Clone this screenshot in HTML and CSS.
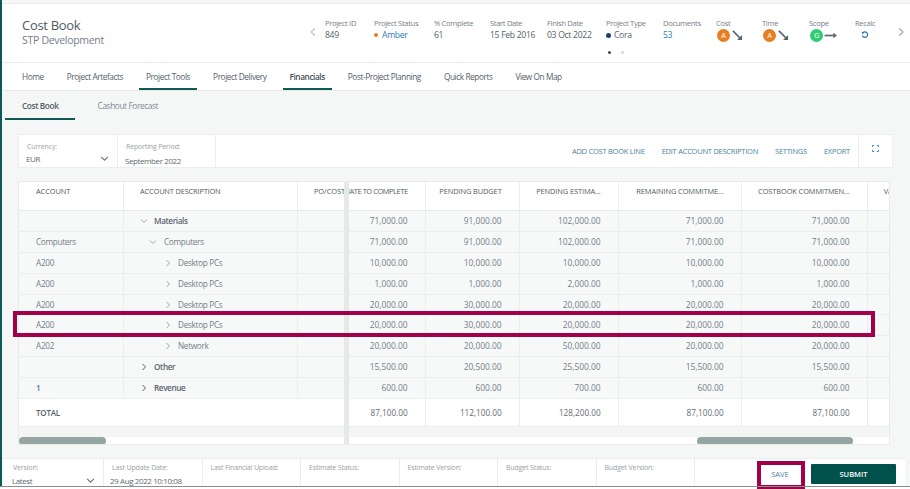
FILE: index.html
```html
<!DOCTYPE html>
<html lang="en">
<head>
<meta charset="utf-8">
<title>Cost Book</title>
<link rel="stylesheet" href="styles.css">
</head>
<body>
<svg class="defs" width="0" height="0" aria-hidden="true">
  <symbol id="right" viewBox="0 0 8 8"><path d="M2.500 1l3 3-3 3" fill="none" stroke="currentColor" stroke-width="1"/></symbol>
  <symbol id="left" viewBox="0 0 8 8"><path d="M5.500 1l-3 3 3 3" fill="none" stroke="currentColor" stroke-width="1"/></symbol>
  <symbol id="down" viewBox="0 0 8 8"><path d="M1 2.500l3 3 3-3" fill="none" stroke="currentColor" stroke-width="1"/></symbol>
  <symbol id="trend" viewBox="0 0 12 12"><path d="M1 1l8 8" stroke="#56656f" stroke-width="1.800" fill="none"/><path d="M11 5.500v5.500h-5.500z" fill="#56656f"/></symbol>
  <symbol id="flat" viewBox="0 0 14 12"><path d="M0 6h10" stroke="#56656f" stroke-width="1.800" fill="none"/><path d="M9.500 3l4 3-4 3z" fill="#56656f"/></symbol>
</svg>
<div class="app">
  <header class="head">
    <div class="title">
      <h1>Cost Book</h1>
      <p>STP Development</p>
    </div>
    <svg class="pager"><use href="#left"/></svg>
    <div class="kpi-wrap">
      <div class="kpis">
        <div class="kpi"><span>Project ID</span><b>849</b></div>
        <div class="kpi"><span>Project Status</span><b class="link"><i class="dot amber"></i>Amber</b></div>
        <div class="kpi"><span>% Complete</span><b>61</b></div>
        <div class="kpi"><span>Start Date</span><b>15 Feb 2016</b></div>
        <div class="kpi"><span>Finish Date</span><b>03 Oct 2022</b></div>
        <div class="kpi"><span>Project Type</span><b><i class="dot navy"></i>Cora</b></div>
        <div class="kpi"><span>Documents</span><b class="link">53</b></div>
        <div class="kpi"><span>Cost</span><b class="rag"><i class="badge a">A</i><svg class="trend"><use href="#trend"/></svg></b></div>
        <div class="kpi"><span>Time</span><b class="rag"><i class="badge a">A</i><svg class="trend"><use href="#trend"/></svg></b></div>
        <div class="kpi"><span>Scope</span><b class="rag"><i class="badge g">G</i><svg class="flat"><use href="#flat"/></svg></b></div>
        <div class="kpi"><span>Recalc</span><b class="rag"><svg class="recalc" viewBox="0 0 10 10"><path d="M2 2.600a3.400 3.400 0 1 1-.4 3" fill="none" stroke="#2a7ab8" stroke-width="1.500"/><path d="M0.600 1l3.600.6-2.400 2.600z" fill="#2a7ab8"/></svg></b></div>
      </div>
      <div class="dots"><i class="on"></i><i></i></div>
    </div>
    <svg class="pager next"><use href="#right"/></svg>
  </header>

  <nav class="nav">
    <a>Home</a><a>Project Artefacts</a><a class="under">Project Tools</a><a>Project Delivery</a><a class="under strong">Financials</a><a>Post-Project Planning</a><a>Quick Reports</a><a>View On Map</a>
  </nav>

  <div class="subnav">
    <a class="current">Cost Book</a><a>Cashout Forecast</a>
  </div>

  <section class="toolbar">
    <div class="field sel"><label>Currency:</label><div class="val">EUR<svg class="caret"><use href="#down"/></svg></div></div>
    <div class="field"><label>Reporting Period:</label><div class="val low">September 2022</div></div>
    <div class="actions"><a>ADD COST BOOK LINE</a><a>EDIT ACCOUNT DESCRIPTION</a><a>SETTINGS</a><a>EXPORT</a></div>
    <div class="full"><svg viewBox="0 0 8 8"><path d="M0.500 2.500v-2h2M5.500 .5h2v2M7.500 5.500v2h-2M2.500 7.500h-2v-2" fill="none" stroke="#2a7ab8" stroke-width="1"/></svg></div>
  </section>

  <section class="table">
    <div class="pane frozen">
      <div class="th">ACCOUNT</div><div class="th desc">ACCOUNT DESCRIPTION</div><div class="th clip">PO/COST</div>

      <div class="td"></div><div class="td tree l1 strong"><svg class="chev"><use href="#down"/></svg>Materials</div><div class="td"></div>
      <div class="td">Computers</div><div class="td tree l2"><svg class="chev"><use href="#down"/></svg>Computers</div><div class="td"></div>
      <div class="td">A200</div><div class="td tree l3"><svg class="chev"><use href="#right"/></svg>Desktop PCs</div><div class="td"></div>
      <div class="td">A200</div><div class="td tree l3"><svg class="chev"><use href="#right"/></svg>Desktop PCs</div><div class="td"></div>
      <div class="td">A200</div><div class="td tree l3"><svg class="chev"><use href="#right"/></svg>Desktop PCs</div><div class="td"></div>
      <div class="td">A200</div><div class="td tree l3"><svg class="chev"><use href="#right"/></svg>Desktop PCs</div><div class="td"></div>
      <div class="td">A202</div><div class="td tree l3"><svg class="chev"><use href="#right"/></svg>Network</div><div class="td"></div>
      <div class="td"></div><div class="td tree l1 strong"><svg class="chev dark"><use href="#right"/></svg>Other</div><div class="td"></div>
      <div class="td acc">1</div><div class="td tree l1 strong"><svg class="chev dark"><use href="#right"/></svg>Revenue</div><div class="td"></div>

      <div class="total-label">TOTAL</div>
      <div class="gap"></div>
      <div class="track"><div class="thumb left"></div></div>
    </div>
    <div class="splitter"></div>
    <div class="pane scroll">
      <div class="th end tight">ESTIMATE TO COMPLETE</div><div class="th end">PENDING BUDGET</div><div class="th end">PENDING ESTIMA...</div><div class="th end">REMAINING COMMITME...</div><div class="th end">COSTBOOK COMMITMEN...</div><div class="th clip">VARIANCE</div>

      <div class="td num">71,000.00</div><div class="td num">91,000.00</div><div class="td num">102,000.00</div><div class="td num">71,000.00</div><div class="td num">71,000.00</div><div class="td"></div>
      <div class="td num">71,000.00</div><div class="td num">91,000.00</div><div class="td num">102,000.00</div><div class="td num">71,000.00</div><div class="td num">71,000.00</div><div class="td"></div>
      <div class="td num">10,000.00</div><div class="td num">10,000.00</div><div class="td num">10,000.00</div><div class="td num">10,000.00</div><div class="td num">10,000.00</div><div class="td"></div>
      <div class="td num">1,000.00</div><div class="td num">1,000.00</div><div class="td num">2,000.00</div><div class="td num">1,000.00</div><div class="td num">1,000.00</div><div class="td"></div>
      <div class="td num">20,000.00</div><div class="td num">30,000.00</div><div class="td num">20,000.00</div><div class="td num">20,000.00</div><div class="td num">20,000.00</div><div class="td"></div>
      <div class="td num">20,000.00</div><div class="td num">30,000.00</div><div class="td num">20,000.00</div><div class="td num">20,000.00</div><div class="td num">20,000.00</div><div class="td"></div>
      <div class="td num">20,000.00</div><div class="td num">20,000.00</div><div class="td num">50,000.00</div><div class="td num">20,000.00</div><div class="td num">20,000.00</div><div class="td"></div>
      <div class="td num">15,500.00</div><div class="td num">20,500.00</div><div class="td num">25,500.00</div><div class="td num">15,500.00</div><div class="td num">15,500.00</div><div class="td"></div>
      <div class="td num">600.00</div><div class="td num">600.00</div><div class="td num">700.00</div><div class="td num">600.00</div><div class="td num">600.00</div><div class="td"></div>

      <div class="tot num">87,100.00</div><div class="tot num">112,100.00</div><div class="tot num">128,200.00</div><div class="tot num">87,100.00</div><div class="tot num">87,100.00</div><div class="tot"></div>
      <div class="gap"></div>
      <div class="track"><div class="thumb right"></div></div>
    </div>
  </section>

  <footer class="foot">
    <div class="fcell sel"><label>Version:</label><div class="val">Latest<svg class="caret"><use href="#down"/></svg></div></div>
    <div class="fcell"><label>Last Update Date:</label><div class="val">29 Aug 2022 10:10:08</div></div>
    <div class="fcell"><label>Last Financial Upload:</label></div>
    <div class="fcell"><label>Estimate Status:</label></div>
    <div class="fcell"><label>Estimate Version:</label></div>
    <div class="fcell"><label>Budget Status:</label></div>
    <div class="fcell"><label>Budget Version:</label></div>
    <div class="buttons"><button class="save">SAVE</button><button class="submit">SUBMIT</button></div>
  </footer>

  <div class="hl hl-row"></div>
  <div class="hl hl-save"></div>
</div>
</body>
</html>
```
FILE: styles.css
```css
* { box-sizing: border-box; }
html, body { margin: 0; padding: 0; background: #fff; }
body { width: 910px; height: 489px; overflow: hidden; font-family: "Open Sans", "Noto Sans", sans-serif; color: #5f6b73; }
.defs { position: absolute; }
.app { position: relative; width: 910px; height: 487px; border-left: 2px solid #0b5a55; background: #f5f7f7; display: flex; flex-direction: column; }

.head { height: 60px; margin-top: 3px; background: #fff; border-top: 1px solid #e9ebeb; border-bottom: 1px solid #e9ebeb; display: flex; align-items: flex-start; flex: none; }
.title { width: 306px; padding: 13px 0 0 20px; }
.title h1 { margin: 0; font-size: 13px; line-height: 17px; font-weight: 400; letter-spacing: -0.3px; color: #4e5b64; }
.title p { margin: 0; font-size: 10.500px; line-height: 13px; letter-spacing: -0.3px; color: #74808a; }
.pager { width: 10px; height: 10px; margin: 23px 0 0 0; color: #c3c8cb; flex: none; }
.pager.next { margin-left: 6px; color: #a4abb0; }
.kpi-wrap { width: 565px; margin-left: 7px; padding-top: 14px; }
.kpis { display: grid; grid-template-columns: 49px 60px 56px 57px 59px 57px 53px 46px 47px 46px 40px; }
.kpi { display: flex; flex-direction: column; }
.kpi span { font-size: 7.600px; line-height: 11px; letter-spacing: -0.33px; color: #75818a; white-space: nowrap; }
.kpi b { font-size: 8.600px; line-height: 12px; letter-spacing: -0.3px; font-weight: 400; color: #55626b; white-space: nowrap; display: flex; align-items: center; }
.kpi b.link { color: #2f7db5; }
.dot { display: inline-block; width: 4px; height: 4px; border-radius: 50%; margin-right: 4px; }
.dot.amber { background: #e67e22; }
.dot.navy { width: 5px; height: 5px; background: #1f3f6e; margin-right: 3px; }
.rag { height: 13px; }
.badge { width: 13px; height: 13px; margin-left: 1px; border-radius: 50%; color: #fff; font-size: 7.500px; line-height: 13px; font-style: normal; text-align: center; flex: none; }
.badge.a { background: #e67e22; }
.badge.g { background: #2ecc71; }
.trend { width: 11px; height: 11px; margin-left: 2px; }
.flat { width: 14px; height: 11px; margin-left: 1px; }
.recalc { width: 8px; height: 8px; margin-left: 6px; margin-top: -1px; }
.dots { display: flex; gap: 10px; margin: 9px 0 0 283px; }
.dots i { width: 3px; height: 3px; border-radius: 50%; background: #d5d8da; }
.dots i.on { background: #3a4650; }

.nav { height: 28px; background: #fff; border-bottom: 1px solid #e6e8e8; display: flex; gap: 9px; padding-left: 13px; flex: none; }
.nav a { padding: 0 7px; font-size: 8.300px; line-height: 27px; height: 27px; letter-spacing: -0.44px; color: #54616a; white-space: nowrap; }
.nav a.under { border-bottom: 2px solid #0f5a56; }
.nav a.strong { font-weight: 600; color: #45525b; }

.subnav { height: 30px; display: flex; gap: 6px; padding-left: 3px; flex: none; }
.subnav a { padding: 0 17px; font-size: 8.300px; line-height: 30px; height: 29px; letter-spacing: -0.4px; color: #7e8a92; white-space: nowrap; }
.subnav a.current { border-bottom: 2px solid #0f5a56; color: #515e67; font-weight: 600; padding: 0 16px 0 17px; }

.toolbar { width: 875px; height: 34px; margin: 13px 0 0 16px; background: #fff; border: 1px solid #eceeee; display: flex; flex: none; }
.field { width: 98px; padding: 7px 8px 0 8px; border-right: 1px solid #eceeee; }
.field.sel { width: 99px; }
.field label, .fcell label { display: block; font-size: 7px; line-height: 10px; letter-spacing: -0.15px; color: #98a1a8; white-space: nowrap; }
.val { font-size: 8px; line-height: 11px; letter-spacing: -0.4px; margin: 1px 0 0 -1px; color: #5f6b73; white-space: nowrap; display: flex; justify-content: space-between; align-items: center; }
.val.low { margin-top: 3px; }
.caret { width: 9px; height: 9px; color: #68747c; }
.actions { flex: 1; display: flex; justify-content: flex-end; gap: 17px; padding: 11px 8px 0 0; }
.actions a { font-size: 7.500px; line-height: 11px; letter-spacing: -0.25px; color: #4b7fa6; white-space: nowrap; }
.full { width: 34px; border-left: 1px solid #eceeee; padding: 10px 0 0 13px; }
.full svg { width: 7px; height: 7px; display: block; }

.table { width: 872px; height: 264px; margin: 13px 0 0 16px; border: 1px solid #e9ebeb; background: #fff; display: flex; flex: none; }
.pane { display: grid; grid-template-rows: 29px repeat(9, 20.900px) 28px 10px 8px; overflow: hidden; }
.frozen { width: 325px; grid-template-columns: 105px 174px 46px; }
.scroll { width: 541px; grid-template-columns: 77px 94px 99px 123px 126px 22px; }
.splitter { width: 5px; background: #e7e9e9; flex: none; }
.th, .td, .tot { white-space: nowrap; overflow: hidden; border-right: 1px solid #ebedee; }
.th { background: #fff; padding: 4px 0 0 17px; font-size: 7.400px; line-height: 11px; letter-spacing: -0.08px; color: #4f5c65; border-bottom: 1px solid #e6e8e9; }
.th.desc { padding-left: 16px; letter-spacing: -0.15px; }
.th.clip { border-right: 0; padding-left: 16px; }
.th.end { display: flex; justify-content: flex-end; padding: 4px 17px 0 0; }
.th.tight { letter-spacing: -0.4px; }
.td { background: #f7f8f8; border-bottom: 1px solid #ebedee; font-size: 8.200px; letter-spacing: -0.3px; line-height: 20px; padding-left: 17px; color: #737f88; }
.td:nth-child(3n) { border-right: 0; }
.scroll .td:nth-child(n) { border-right: 1px solid #ebedee; }
.scroll .td:nth-child(6n) { border-right: 0; }
.td.num, .tot.num { text-align: right; padding: 0 17px 0 0; font-size: 8.400px; letter-spacing: 0; }
.td.strong { font-weight: 600; color: #5b6770; letter-spacing: -0.4px; }
.acc { font-weight: 600; color: #4b7fa6; }
.td.tree { display: flex; align-items: center; }
.td.l1 { padding-left: 16px; }
.td.l2 { padding-left: 25px; }
.td.l3 { padding-left: 40px; }
.chev { width: 8px; height: 8px; margin-right: 6px; color: #a0a8ae; flex: none; }
.l2 .chev { margin-right: 7px; }
.chev.dark { color: #55626b; }
.total-label { grid-column: 1 / -1; background: #fff; border-bottom: 1px solid #eceeee; font-size: 8px; line-height: 27px; padding-left: 17px; font-weight: 600; letter-spacing: -0.2px; color: #55626b; }
.tot { background: #fff; border-bottom: 1px solid #eceeee; line-height: 27px; color: #5f6b73; }
.tot.num { font-size: 8.200px; }
.gap { grid-column: 1 / -1; background: #f4f6f6; }
.track { grid-column: 1 / -1; background: #fff; }
.thumb { height: 8px; border-radius: 4px; background: #95a5a3; }
.thumb.left { width: 87px; }
.thumb.right { width: 156px; margin-left: 348px; }

.foot { width: 902px; height: 29px; margin: 13px 0 0 1px; background: #fff; border-top: 1px solid #eceeee; display: flex; flex: none; }
.fcell { width: 98.500px; padding: 4px 8px 0 8px; border-right: 1px solid #eceeee; }
.fcell.sel { width: 101px; padding-left: 10px; }
.fcell .val { margin: 2px 0 0 -2px; }
.fcell.sel .val { margin-left: -1px; }
.buttons { flex: 1; display: flex; align-items: flex-start; justify-content: flex-end; gap: 7px; padding: 5px 9px 0 0; }
.buttons button { border: 0; height: 20px; font: 400 7.500px/20px "Open Sans", sans-serif; padding: 0; cursor: pointer; }
.save { width: 48px; background: #fff; color: #4b7fa6; }
.buttons .submit { width: 85px; background: #00504c; color: #fff; border-radius: 1px; font-weight: 600; }

.hl { position: absolute; border: 4px solid #a3004a; pointer-events: none; }
.hl-row { left: 11px; top: 311px; width: 862px; height: 26px; }
.hl-save { left: 755px; top: 461px; width: 48px; height: 28px; }
.app::after { content: ""; position: absolute; left: -2px; right: 0; top: 486px; height: 1px; background: #8b8f90; }
```
